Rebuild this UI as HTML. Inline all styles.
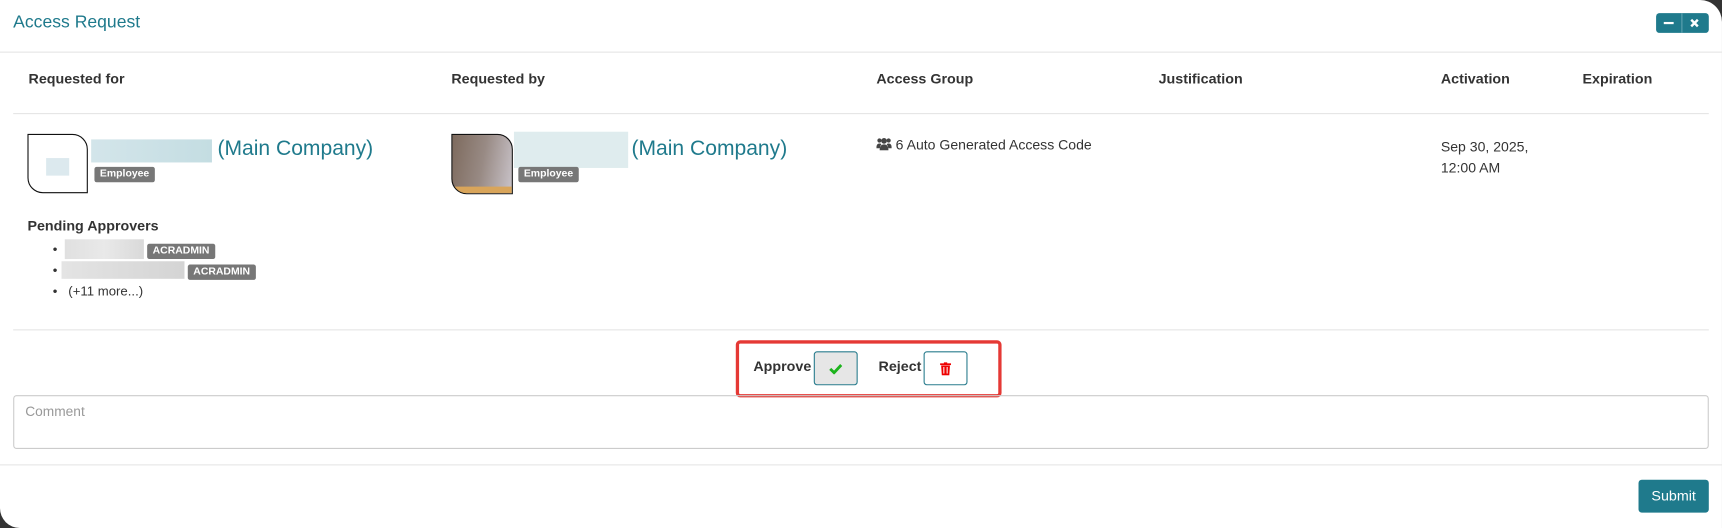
<!DOCTYPE html>
<html><head><meta charset="utf-8"><style>
html,body{margin:0;padding:0;width:1722px;height:528px;overflow:hidden;background:#333;}
#m{position:absolute;left:0;top:0;width:1568px;height:481px;background:#fff;transform:scale(1.0982,1.0977);transform-origin:0 0;border-top-right-radius:20px;border-bottom-left-radius:18px;overflow:hidden;font-family:"Liberation Sans",Arial,sans-serif;color:#333;font-size:13px;}
.a{position:absolute;white-space:nowrap;}
.hr{position:absolute;height:1px;background:#e5e5e5;}
.b{font-weight:bold;}
.badge{position:absolute;background:#777;color:#fff;font-weight:bold;font-size:9.5px;line-height:14px;padding:0 5px;border-radius:2px;}
.teal{color:#1f7a8c;}
</style></head><body><div id="m">
<div class="a teal" style="left:12px;top:12px;font-size:16px;">Access Request</div>
<div class="a" style="left:1508px;top:12px;width:48px;height:18px;background:#1f7a8c;border-radius:3px;"></div>
<div class="a" style="left:1531px;top:12px;width:1px;height:18px;background:#5fa2b0;"></div>
<div class="a" style="left:1515px;top:20px;width:9px;height:2px;background:#fff;"></div>
<svg class="a" style="left:1539px;top:17px" width="8" height="8" viewBox="0 0 8 8"><path d="M1 1L7 7M7 1L1 7" stroke="#fff" stroke-width="2.2"/></svg>
<div class="hr" style="left:0;top:47px;width:1568px;"></div>

<div class="a b" style="left:26px;top:64px;">Requested for</div>
<div class="a b" style="left:411px;top:64px;">Requested by</div>
<div class="a b" style="left:798px;top:64px;">Access Group</div>
<div class="a b" style="left:1055px;top:64px;">Justification</div>
<div class="a b" style="left:1312px;top:64px;">Activation</div>
<div class="a b" style="left:1441px;top:64px;">Expiration</div>
<div class="hr" style="left:12px;top:103px;width:1544px;"></div>

<div class="a" style="left:25px;top:122px;width:53px;height:52px;border:1px solid #111;border-radius:0 14px 0 14px;"></div>
<div class="a" style="left:42px;top:144px;width:21px;height:16px;background:#dce9ee;"></div>
<div class="a" style="left:83px;top:127px;width:110px;height:21px;background:linear-gradient(90deg,#d3e5ea,#c4dde2);"></div>
<div class="a teal" style="left:198px;top:125px;font-size:19.2px;">(Main Company)</div>
<div class="badge" style="left:86px;top:152px;">Employee</div>

<div class="a" style="left:411px;top:122px;width:54px;height:53px;border:1px solid #111;border-radius:0 14px 0 14px;background:linear-gradient(100deg,#7d6a5d,#988a84 50%,#c9c3c9);overflow:hidden;"><div style="position:absolute;bottom:0;left:0;right:0;height:6px;background:#d9a55a;"></div></div>
<div class="a" style="left:468px;top:120px;width:104px;height:33px;background:#dfecee;"></div>
<div class="a teal" style="left:575px;top:125px;font-size:19.2px;">(Main Company)</div>
<div class="badge" style="left:472px;top:152px;">Employee</div>

<div class="a" style="left:798px;top:124px;font-size:12.8px;">
<svg width="14" height="12" viewBox="0 0 14 12" style="vertical-align:-1px"><circle cx="7" cy="3.3" r="2.6" fill="#444"/><circle cx="2.8" cy="3" r="1.9" fill="#444"/><circle cx="11.2" cy="3" r="1.9" fill="#444"/><path d="M3 12c0-4 1.5-5.5 4-5.5s4 1.5 4 5.5z" fill="#444"/><path d="M0 10c0-3 1-4.3 2.8-4.3 1 0 1.5.3 1.8.7-.8 1-1.3 2-1.4 3.6z" fill="#444"/><path d="M14 10c0-3-1-4.3-2.8-4.3-1 0-1.5.3-1.8.7.8 1 1.3 2 1.4 3.6z" fill="#444"/></svg> 6 Auto Generated Access Code</div>
<div class="a" style="left:1312px;top:124px;line-height:19px;font-size:12.8px;">Sep 30, 2025,<br>12:00 AM</div>

<div class="a b" style="left:25px;top:198px;">Pending Approvers</div>
<div class="a" style="left:48px;top:220px;font-size:12px;">•</div>
<div class="a" style="left:59px;top:218px;width:72px;height:18px;background:linear-gradient(90deg,#e0e0e0,#e9e9e9,#d9d9d9);"></div>
<div class="badge" style="left:134px;top:222px;">ACRADMIN</div>
<div class="a" style="left:48px;top:239px;font-size:12px;">•</div>
<div class="a" style="left:56px;top:238px;width:112px;height:16px;background:linear-gradient(90deg,#e4e4e4,#d4d4d4);"></div>
<div class="badge" style="left:171px;top:241px;">ACRADMIN</div>
<div class="a" style="left:48px;top:258px;font-size:12px;">•&nbsp;&nbsp;&nbsp;(+11 more...)</div>

<div class="hr" style="left:12px;top:300px;width:1544px;"></div>

<div class="a" style="left:670px;top:310px;width:236px;height:46px;border:3px solid #e53935;border-radius:4px;"></div>
<div class="a b" style="left:686px;top:326px;">Approve</div>
<div class="a" style="left:741px;top:320px;width:38px;height:29px;background:#e6e6e6;border:1px solid #2a7d8e;border-radius:3px;">
<svg width="12" height="10" viewBox="0 0 12 10" style="position:absolute;left:13px;top:10px"><path d="M1 5l3.5 3.5L11 1.5" stroke="#1cb31c" stroke-width="2.6" fill="none"/></svg></div>
<div class="a b" style="left:800px;top:326px;">Reject</div>
<div class="a" style="left:841px;top:320px;width:38px;height:29px;background:#fff;border:1px solid #2a7d8e;border-radius:3px;">
<svg width="10" height="12" viewBox="0 0 10 12" style="position:absolute;left:14px;top:9px"><rect x="0" y="1" width="10" height="1.6" fill="#e00"/><rect x="3.5" y="0" width="3" height="1.5" fill="#e00"/><path d="M1 3h8l-.6 9H1.6z" fill="#e00"/><rect x="3" y="4.3" width="0.9" height="6" fill="#fff"/><rect x="6" y="4.3" width="0.9" height="6" fill="#fff"/></svg></div>

<div class="a" style="left:12px;top:360px;width:1542px;height:47px;border:1px solid #ccc;border-radius:3px;"></div>
<div class="a" style="left:23px;top:368px;color:#999;font-size:12.5px;">Comment</div>
<div class="hr" style="left:0;top:423px;width:1568px;"></div>
<div class="a" style="left:1492px;top:437px;width:64px;height:30px;background:#1f7a8c;border-radius:3px;color:#fff;font-size:13px;text-align:center;line-height:30px;">Submit</div>
</div></body></html>
